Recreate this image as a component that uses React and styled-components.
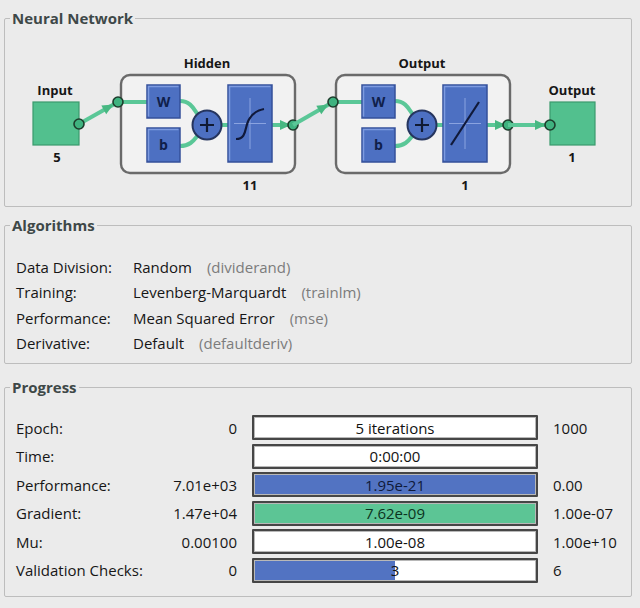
import React from 'react';
import styled, { createGlobalStyle } from 'styled-components';

const GlobalStyle = createGlobalStyle`
    html, body {
        margin: 0;
        padding: 0;
        background: #ebebeb;
    }
    body {
        font-family: "Open Sans", "Noto Sans", sans-serif;
        font-weight: 500;
        color: #161616;
    }
`;

const Window = styled.div`
    width: 640px;
    height: 608px;
    padding: 0 8px 0 4px;
    box-sizing: border-box;
    display: flex;
    flex-direction: column;
`;

const Panel = styled.fieldset`
    margin: ${({ $top }) => $top}px 0 0 0;
    padding: 0;
    border: 1px solid #bdbdbd;
    border-radius: 2px;
    min-width: 0;
`;

const Legend = styled.legend`
    margin-left: 5px;
    padding: 0 2px;
    font-size: 15px;
    line-height: 20px;
    font-weight: 700;
    color: #3e4848;
`;

const AlgoGrid = styled.div`
    display: grid;
    grid-template-columns: 117px 1fr;
    grid-auto-rows: 25.5px;
    align-items: center;
    padding: 19px 0 7px 11px;
    font-size: 15px;
`;

const AlgoValue = styled.span`
    display: flex;
    gap: 15px;
`;

const Note = styled.span`
    color: #7c7c7c;
`;

const ProgressGrid = styled.div`
    display: grid;
    grid-template-columns: 135px 71px 286px auto;
    column-gap: 15px;
    row-gap: 3.6px;
    grid-auto-rows: 25px;
    align-items: center;
    padding: 18px 0 13px 11px;
    font-size: 15px;
`;

const Start = styled.span`
    text-align: right;
`;

const Bar = styled.div`
    height: 25px;
    box-sizing: border-box;
    border: 2px solid #464646;
    border-radius: 1px;
    background: linear-gradient(
        to right,
        ${({ $color }) => $color} ${({ $fill }) => $fill}%,
        #ffffff ${({ $fill }) => $fill}%
    );
    box-shadow: inset 0 0 0 1px #b8b8b8;
    display: flex;
    align-items: center;
    justify-content: center;
    font-size: 15px;
    color: ${({ $ink }) => $ink || '#111'};
`;

const BLUE = '#5273c2';
const GREEN = '#5cc595';

const algorithms = [
    ['Data Division:', 'Random', '(dividerand)'],
    ['Training:', 'Levenberg-Marquardt', '(trainlm)'],
    ['Performance:', 'Mean Squared Error', '(mse)'],
    ['Derivative:', 'Default', '(defaultderiv)'],
];

const progress = [
    { label: 'Epoch:', start: '0', text: '5 iterations', end: '1000', fill: 0 },
    { label: 'Time:', start: '', text: '0:00:00', end: '', fill: 0 },
    { label: 'Performance:', start: '7.01e+03', text: '1.95e-21', end: '0.00', fill: 100, color: BLUE, ink: '#0f1a3a' },
    { label: 'Gradient:', start: '1.47e+04', text: '7.62e-09', end: '1.00e-07', fill: 100, color: GREEN, ink: '#0b3320' },
    { label: 'Mu:', start: '0.00100', text: '1.00e-08', end: '1.00e+10', fill: 0 },
    { label: 'Validation Checks:', start: '0', text: '3', end: '6', fill: 50, color: BLUE },
];

/* --- network diagram pieces, drawn in window coordinates --- */

const WIRE = '#5ac797';

const DiagramSvg = styled.svg`
    display: block;
`;

const Node = ({ x, y }) => (
    <circle cx={x} cy={y} r="5" fill="#3fb27f" stroke="#1d3d2c" strokeWidth="1.6" />
);

const Arrow = ({ x, y, angle = 0 }) => (
    <polygon
        points="-6,-5 5,0 -6,5"
        fill="#47b882"
        transform={`translate(${x} ${y}) rotate(${angle})`}
    />
);

const Block = ({ x, y, w, h, children }) => (
    <g>
        <rect x={x} y={y} width={w} height={h} fill="#4d70c2" stroke="#35509a" strokeWidth="1.5" />
        <path d={`M${x + 1.5} ${y + h - 1.5} V${y + 1.5} H${x + w - 1.5}`} stroke="#7e9be0" strokeWidth="1.5" fill="none" />
        {children}
    </g>
);

const Label = styled.text`
    font-family: "Open Sans", "Noto Sans", sans-serif;
    font-size: ${({ $size }) => $size || 13}px;
    font-weight: 700;
    fill: ${({ $ink }) => $ink || '#161616'};
    text-anchor: middle;
`;

const Layer = ({ x, title, size, transfer }) => {
    const wx = x + 26;
    const tx = x + 107;
    const px = x + 86;
    return (
        <g>
            <rect x={x} y="75" width="174" height="98" rx="9" fill="#f2f2f2" stroke="#6a6a6a" strokeWidth="2.4" />
            <Label x={x + 86} y="68">{title}</Label>
            <Label x={x + 129} y="190">{size}</Label>
            <path d={`M${x - 3} 102 H${wx}`} stroke={WIRE} strokeWidth="4" fill="none" />
            <path d={`M${wx + 33} 101 C${wx + 45} 101 ${wx + 48} 112 ${px - 8} 116`} stroke={WIRE} strokeWidth="4" fill="none" />
            <path d={`M${wx + 33} 146 C${wx + 45} 146 ${wx + 48} 138 ${px - 8} 134`} stroke={WIRE} strokeWidth="4" fill="none" />
            <path d={`M${px + 14} 125 H${tx}`} stroke={WIRE} strokeWidth="4" fill="none" />
            <path d={`M${tx + 44} 125 H${x + 168}`} stroke={WIRE} strokeWidth="4" fill="none" />
            <Arrow x={x + 165} y="125" />
            <Block x={wx} y={85} w={33} h={33}>
                <Label x={wx + 16.5} y="107" $size={14} $ink="#10204a">W</Label>
            </Block>
            <Block x={wx} y={128} w={33} h={34}>
                <Label x={wx + 16.5} y="150" $size={14} $ink="#10204a">b</Label>
            </Block>
            <circle cx={px} cy="125" r="14.5" fill="#4d70c2" stroke="#26355e" strokeWidth="2" />
            <path d={`M${px - 7} 125 H${px + 7} M${px} 118 V132`} stroke="#101a33" strokeWidth="2.2" />
            <Block x={tx} y={85} w={44} h={77}>
                <path d={`M${tx + 6} 123.5 H${tx + 38} M${tx + 22} 98 V149`} stroke="#8aa3e0" strokeWidth="1" />
                {transfer === 'tansig' ? (
                    <path
                        d={`M${tx + 8} 139 C${tx + 20} 139 ${tx + 16} 125 ${tx + 22} 118 C${tx + 26} 112 ${tx + 30} 110 ${tx + 36} 109`}
                        stroke="#10193a"
                        strokeWidth="2.2"
                        fill="none"
                    />
                ) : (
                    <path d={`M${tx + 8} 145 L${tx + 36} 102`} stroke="#10193a" strokeWidth="2.2" fill="none" />
                )}
            </Block>
            <Node x={x - 3} y={102} />
            <Node x={x + 172} y={125} />
        </g>
    );
};

const Diagram = () => (
    <DiagramSvg width="626" height="178" viewBox="5 28 626 178">
        {/* input */}
        <Label x="55" y="95">Input</Label>
        <rect x="33" y="102" width="46" height="43" fill="#52c08e" stroke="#3b9a6d" strokeWidth="1.2" />
        <Label x="57" y="162">5</Label>
        <path d="M79 124 L118 102" stroke={WIRE} strokeWidth="4" />
        <Arrow x={109} y={107} angle={-29} />
        <Node x={79} y={124} />

        <Layer x={121} title="Hidden" size="11" transfer="tansig" />

        <path d="M293 125 L333 102" stroke={WIRE} strokeWidth="4" />
        <Arrow x={324} y={107} angle={-30} />

        <Layer x={336} title="Output" size="1" transfer="purelin" />

        {/* output */}
        <path d="M508 125 H546" stroke={WIRE} strokeWidth="4" />
        <Arrow x={541} y={125} />
        <Label x="572" y="95">Output</Label>
        <rect x="550" y="102" width="45" height="43" fill="#52c08e" stroke="#3b9a6d" strokeWidth="1.2" />
        <Node x={550} y={125} />
        <Label x="572" y="162">1</Label>
    </DiagramSvg>
);

const App = () => (
    <>
        <GlobalStyle />
        <Window>
            <Panel $top={8}>
                <Legend>Neural Network</Legend>
                <Diagram />
            </Panel>
            <Panel $top={8}>
                <Legend>Algorithms</Legend>
                <AlgoGrid>
                    {algorithms.map(([label, value, note]) => (
                        <React.Fragment key={label}>
                            <span>{label}</span>
                            <AlgoValue>
                                <span>{value}</span>
                                <Note>{note}</Note>
                            </AlgoValue>
                        </React.Fragment>
                    ))}
                </AlgoGrid>
            </Panel>
            <Panel $top={13}>
                <Legend>Progress</Legend>
                <ProgressGrid>
                    {progress.map((row) => (
                        <React.Fragment key={row.label}>
                            <span>{row.label}</span>
                            <Start>{row.start}</Start>
                            <Bar $fill={row.fill} $color={row.color || '#fff'} $ink={row.ink}>
                                {row.text}
                            </Bar>
                            <span>{row.end}</span>
                        </React.Fragment>
                    ))}
                </ProgressGrid>
            </Panel>
        </Window>
    </>
);

export default App;
